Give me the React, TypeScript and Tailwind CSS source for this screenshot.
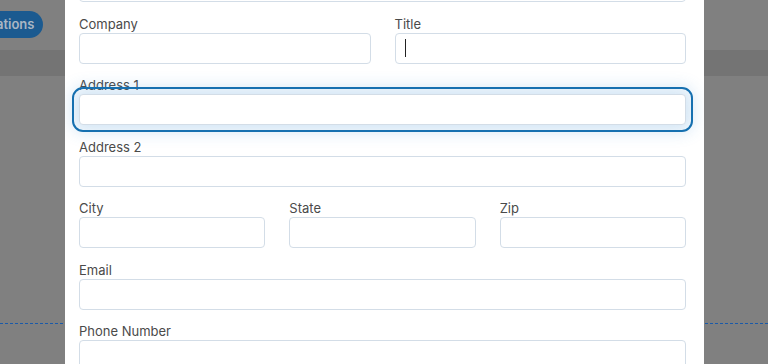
function Field({ label, cursor = false }: { label: string; cursor?: boolean }) {
  return (
    <div className="flex flex-col">
      <p className="text-[13px] leading-[17px] text-[#4a4a4a]">{label}</p>
      <div className="flex h-[31px] items-center rounded-[4px] border border-[#d3dde7] bg-white">
        {cursor && <span className="ml-[9px] h-[18px] w-px bg-[#222]" />}
      </div>
    </div>
  )
}

function FocusedField({ label }: { label: string }) {
  return (
    <div className="flex flex-col">
      <p className="text-[13px] leading-[17px] text-[#4a4a4a]">{label}</p>
      <div className="h-[31px] rounded-[4px] border border-[#d3dde7] bg-white outline-2 outline-offset-[5px] outline-[#1670b0] shadow-[0_0_16px_7px_rgba(60,140,210,0.22)] [outline-style:solid]" />
    </div>
  )
}

export default function App() {
  return (
    <div
      className="relative h-[364px] w-[768px] overflow-hidden bg-[#808080]"
      style={{ fontFamily: 'Inter, "Open Sans", sans-serif' }}
    >
      {/* page behind the overlay */}
      <div className="flex flex-col">
        <div className="flex h-[50px] items-start pt-[11px]">
          <div className="-ml-[39px] flex h-[27px] items-center rounded-full bg-[#1b5a90] pl-[12px] pr-[9px] text-[13px] font-semibold text-[#a9b6c4]">
            Locations
          </div>
        </div>
        <div className="h-[26px] w-full bg-[#747474]" />
        <div className="mt-[247px] w-full border-t border-dashed border-[#1a5aa8]" />
      </div>

      {/* modal */}
      <div className="absolute left-[65px] top-0 h-full w-[639px] overflow-hidden bg-white">
        <div className="-mt-[46px] flex flex-col gap-[13.5px] pl-[14px] pr-[18px]">
          <Field label="Last Name" />
          <div className="grid grid-cols-2 gap-x-[24px]">
            <Field label="Company" />
            <Field label="Title" cursor />
          </div>
          <FocusedField label="Address 1" />
          <Field label="Address 2" />
          <div className="grid grid-cols-3 gap-x-[24px]">
            <Field label="City" />
            <Field label="State" />
            <Field label="Zip" />
          </div>
          <Field label="Email" />
          <Field label="Phone Number" />
        </div>
      </div>
    </div>
  )
}
